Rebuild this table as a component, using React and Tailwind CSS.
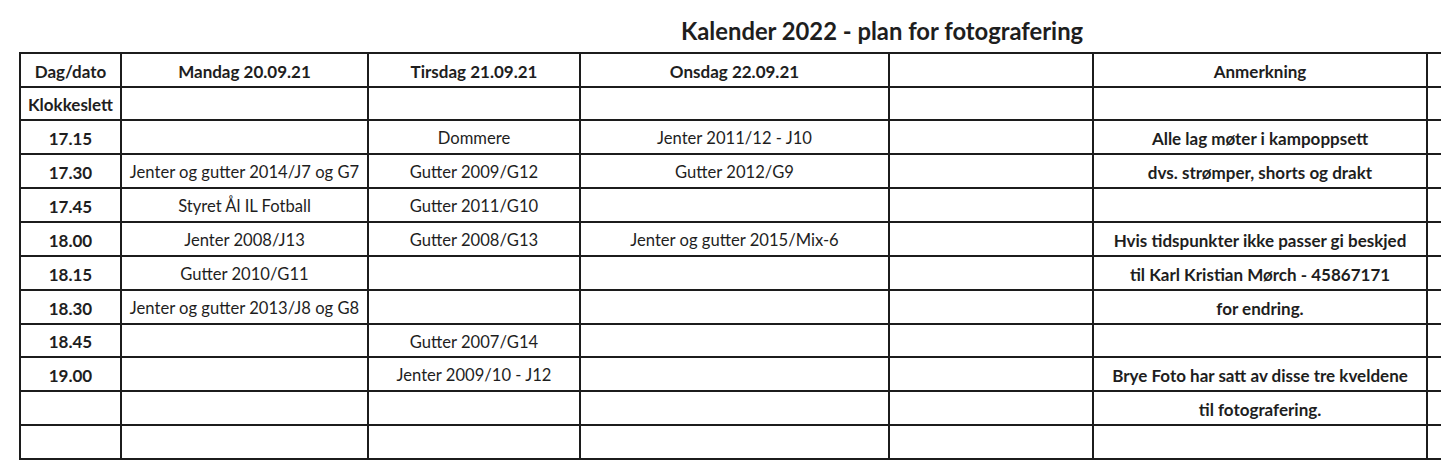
const COLS = [
  'w-[101px]',
  'w-[247px]',
  'w-[212px]',
  'w-[309px]',
  'w-[204px]',
  'w-[334px]',
  'w-[120px]',
];

const ROWS = [
  { h: 'h-[34px]', bold: true, cells: ['Dag/dato', 'Mandag 20.09.21', 'Tirsdag 21.09.21', 'Onsdag 22.09.21', '', 'Anmerkning', ''] },
  { h: 'h-[33px]', cells: ['Klokkeslett', '', '', '', '', '', ''] },
  { h: 'h-[34px]', cells: ['17.15', '', 'Dommere', 'Jenter 2011/12 - J10', '', 'Alle lag møter i kampoppsett', ''] },
  { h: 'h-[34px]', cells: ['17.30', 'Jenter og gutter 2014/J7 og G7', 'Gutter 2009/G12', 'Gutter 2012/G9', '', 'dvs. strømper, shorts og drakt', ''] },
  { h: 'h-[34px]', cells: ['17.45', 'Styret Ål IL Fotball', 'Gutter 2011/G10', '', '', '', ''] },
  { h: 'h-[34px]', cells: ['18.00', 'Jenter 2008/J13', 'Gutter 2008/G13', 'Jenter og gutter 2015/Mix-6', '', 'Hvis tidspunkter ikke passer gi beskjed', ''] },
  { h: 'h-[34px]', cells: ['18.15', 'Gutter 2010/G11', '', '', '', 'til Karl Kristian Mørch - 45867171', ''] },
  { h: 'h-[34px]', cells: ['18.30', 'Jenter og gutter 2013/J8 og G8', '', '', '', 'for endring.', ''] },
  { h: 'h-[33px]', cells: ['18.45', '', 'Gutter 2007/G14', '', '', '', ''] },
  { h: 'h-[34px]', cells: ['19.00', '', 'Jenter 2009/10 - J12', '', '', 'Brye Foto har satt av disse tre kveldene', ''] },
  { h: 'h-[34px]', cells: ['', '', '', '', '', 'til fotografering.', ''] },
  { h: 'h-[34px]', cells: ['', '', '', '', '', '', ''] },
];

function Cell({ text, width, height, bold }) {
  return (
    <div
      className={`${width} ${height} shrink-0 flex items-center justify-center pt-[3px] border-r-2 border-b-2 border-[#1c1c1c] whitespace-nowrap ${
        bold ? 'font-bold text-[17px]' : 'text-[16.6px]'
      }`}
    >
      {text}
    </div>
  );
}

function App() {
  return (
    <div
      className="w-[1441px] h-[471px] overflow-hidden bg-white text-[#1e1e1e]"
      style={{ fontFamily: 'Lato, "Liberation Sans", sans-serif' }}
    >
      <div className="h-[52px] flex items-center pl-[681px] pt-[12px]">
        <h1 className="text-[23.8px] font-bold leading-none">
          Kalender 2022 - plan for fotografering
        </h1>
      </div>
      <div className="ml-[19px] w-max border-t-2 border-l-2 border-[#1c1c1c]">
        {ROWS.map((row, i) => (
          <div key={i} className="flex">
            {row.cells.map((text, j) => (
              <Cell
                key={j}
                text={text}
                width={COLS[j]}
                height={row.h}
                bold={row.bold || j === 0 || j === 5}
              />
            ))}
          </div>
        ))}
      </div>
    </div>
  );
}

export default App;
